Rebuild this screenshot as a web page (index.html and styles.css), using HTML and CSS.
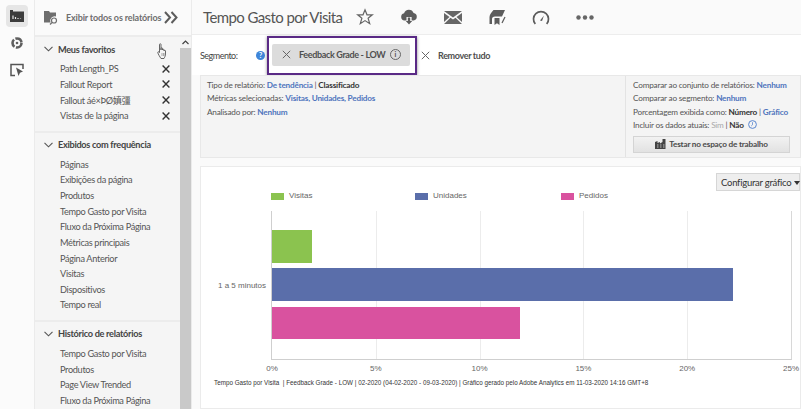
FILE: index.html
```html
<!DOCTYPE html>
<html lang="pt">
  <head>
    <meta charset="utf-8">
    <title>Tempo Gasto por Visita</title>
    <link rel="stylesheet" href="styles.css">
  </head>
  <body>
    <div class="page">
      <aside class="rail">
        <div class="rail-btn active">
          <svg width="14" height="12" viewBox="0 0 14 12"><path d="M0 0h3v1.500h11V12H0z" fill="#3c3c3c"/><path d="M3 9V5.500M5.500 9V7M8 9V8M10.500 9V8.500" stroke="#e6e6e6" stroke-width="1.200"/></svg>
        </div>
        <div class="rail-btn">
          <svg width="14" height="14" viewBox="0 0 14 14"><circle cx="7" cy="7" r="4.500" fill="none" stroke="#5f5f5f" stroke-width="2.600" stroke-dasharray="8 1.500"/><circle cx="7" cy="7" r="1.300" fill="#5f5f5f"/></svg>
        </div>
        <div class="rail-btn">
          <svg width="14" height="14" viewBox="0 0 14 14"><path d="M5 12.500H1V1.500h12v4.500" fill="none" stroke="#555" stroke-width="1.500"/><path d="M6 4.500l7 4-3 1.200-1.500 3.300z" fill="#555"/></svg>
        </div>
      </aside>

      <nav class="nav">
        <div class="nav-top">
          <svg class="nav-top-icon" width="14" height="15" viewBox="0 0 14 15"><path d="M0 1h5l1 1.500h6V6.500A4.500 4.500 0 0 0 6.500 12.500H0z" fill="#6e6e6e"/><circle cx="10" cy="10.500" r="2.500" fill="none" stroke="#6e6e6e" stroke-width="1.200"/><path d="M8 12.500l-2 2" stroke="#6e6e6e" stroke-width="1.200"/></svg>
          <span class="nav-top-label">Exibir todos os relatórios</span>
          <svg class="nav-top-more" width="14" height="13" viewBox="0 0 14 13"><path d="M1 1l5 5.500-5 5.500M7.500 1l5 5.500-5 5.500" fill="none" stroke="#5c5c5c" stroke-width="2"/></svg>
        </div>
        <div class="nav-body">
          <div class="nav-list">
            <section class="group">
              <h3 class="group-title"><svg class="chev" width="9" height="6" viewBox="0 0 9 6"><path d="M.5 .8l4 4 4-4" fill="none" stroke="#555" stroke-width="1.100"/></svg>Meus favoritos</h3>
              <ul class="items">
                <li>Path Length_PS<svg class="rm" width="8" height="8" viewBox="0 0 8 8"><path d="M.6 .6l6.800 6.800M7.400 .6L.6 7.400" stroke="#333" stroke-width="1.400"/></svg></li>
                <li>Fallout Report<svg class="rm" width="8" height="8" viewBox="0 0 8 8"><path d="M.6 .6l6.800 6.800M7.400 .6L.6 7.400" stroke="#333" stroke-width="1.400"/></svg></li>
                <li>Fallout áé×ÞØ嫃彊<svg class="rm" width="8" height="8" viewBox="0 0 8 8"><path d="M.6 .6l6.800 6.800M7.400 .6L.6 7.400" stroke="#333" stroke-width="1.400"/></svg></li>
                <li>Vistas de la página<svg class="rm" width="8" height="8" viewBox="0 0 8 8"><path d="M.6 .6l6.800 6.800M7.400 .6L.6 7.400" stroke="#333" stroke-width="1.400"/></svg></li>
              </ul>
            </section>
            <section class="group">
              <h3 class="group-title"><svg class="chev" width="9" height="6" viewBox="0 0 9 6"><path d="M.5 .8l4 4 4-4" fill="none" stroke="#555" stroke-width="1.100"/></svg>Exibidos com frequência</h3>
              <ul class="items">
                <li>Páginas</li>
                <li>Exibições da página</li>
                <li>Produtos</li>
                <li>Tempo Gasto por Visita</li>
                <li>Fluxo da Próxima Página</li>
                <li>Métricas principais</li>
                <li>Página Anterior</li>
                <li>Visitas</li>
                <li>Dispositivos</li>
                <li>Tempo real</li>
              </ul>
            </section>
            <section class="group">
              <h3 class="group-title"><svg class="chev" width="9" height="6" viewBox="0 0 9 6"><path d="M.5 .8l4 4 4-4" fill="none" stroke="#555" stroke-width="1.100"/></svg>Histórico de relatórios</h3>
              <ul class="items">
                <li>Tempo Gasto por Visita</li>
                <li>Produtos</li>
                <li>Page View Trended</li>
                <li>Fluxo da Próxima Página</li>
              </ul>
            </section>
          </div>
          <div class="scrollbar">
            <div class="scroll-up"><svg width="7" height="5" viewBox="0 0 7 5"><path d="M.5 4l3-3 3 3" fill="none" stroke="#444" stroke-width="1.200"/></svg></div>
            <div class="scroll-thumb"></div>
          </div>
        </div>
        <svg class="hand" width="12" height="16" viewBox="0 0 12 16"><path d="M2.500 1.500c0-1 1.500-1 1.500 0V7V5.500c0-1 1.500-1 1.500 0V7c0-1 1.500-1 1.500 0v1c0-1 1.500-1 1.500 0v3c0 2-1 3.500-1.500 4.500H4C3 14 1 11 .8 9.500c0-1 1-1 1.700 0z" fill="#f4f4f4" stroke="#555" stroke-width=".9"/><path d="M5 10v3M6.500 10v3M8 10v3" stroke="#777" stroke-width=".6"/></svg>
      </nav>

      <main class="main">
        <header class="toolbar">
          <h1 class="title">Tempo Gasto por Visita</h1>
          <div class="tools">
            <svg width="18" height="18" viewBox="0 0 18 18"><path d="M9 1.800l2 5h5.300l-4.200 3.400 1.600 5.500L9 12.600l-4.700 3.100 1.600-5.500L1.700 6.800H7z" fill="none" stroke="#666" stroke-width="1.200"/></svg>
            <svg width="18" height="16" viewBox="0 0 18 16"><path d="M4.500 11.500a3.700 3.700 0 0 1-.4-7.300A5 5 0 0 1 13.600 4a3.800 3.800 0 0 1 0 7.500h-2V8H6.500v3.500z" fill="#5c5c5c"/><path d="M7.800 8.500h2.400v3.500h2L9 15.500 5.800 12h2z" fill="#5c5c5c"/></svg>
            <svg width="18" height="13" viewBox="0 0 18 13"><path d="M0 0h18L9 6.500zM0 2v9l5.500-5zM18 2v9l-5.500-5zM0 13l6.500-6.200L9 8.500l2.500-1.700L18 13z" fill="#666"/></svg>
            <svg width="18" height="16" viewBox="0 0 18 16"><path d="M5.500 1H17L14 7.500H7C5 7.500 4 8.500 4 10v5H1.500V8C1.500 6 3.500 3 5.500 1z" fill="#5c5c5c"/><path d="M6.500 9h5v7l-2.500-1.800L6.500 16z" fill="#5c5c5c"/><path d="M17 8l-3 6" stroke="#5c5c5c" stroke-width="1.300"/></svg>
            <svg width="18" height="15" viewBox="0 0 18 15"><path d="M3.300 14A7.500 7.500 0 1 1 14.700 14" fill="none" stroke="#5c5c5c" stroke-width="1.700"/><path d="M8 10.500L12 5.500 10 11z" fill="#5c5c5c"/></svg>
            <svg width="18" height="5" viewBox="0 0 18 5"><circle cx="2.500" cy="2.500" r="2.200" fill="#666"/><circle cx="9" cy="2.500" r="2.200" fill="#666"/><circle cx="15.500" cy="2.500" r="2.200" fill="#666"/></svg>
          </div>
        </header>

        <div class="segment-bar">
          <span class="segment-label">Segmento:</span>
          <span class="help">?</span>
          <div class="chip-frame">
            <div class="chip">
              <svg width="9" height="9" viewBox="0 0 9 9"><path d="M.8 .8l7.400 7.400M8.200 .8L.8 8.200" stroke="#666" stroke-width="1"/></svg>
              <span class="chip-text">Feedback Grade - LOW</span>
              <span class="chip-info">i</span>
            </div>
          </div>
          <svg class="clear-x" width="9" height="9" viewBox="0 0 9 9"><path d="M.8 .8l7.400 7.400M8.200 .8L.8 8.200" stroke="#666" stroke-width="1"/></svg>
          <span class="clear-text">Remover tudo</span>
        </div>

        <div class="info">
          <div class="info-left">
            <p>Tipo de relatório: <a>De tendência</a> | <b>Classificado</b></p>
            <p>Métricas selecionadas: <a>Visitas, Unidades, Pedidos</a></p>
            <p>Analisado por: <a>Nenhum</a></p>
          </div>
          <div class="info-right">
            <p>Comparar ao conjunto de relatórios: <a>Nenhum</a></p>
            <p>Comparar ao segmento: <a>Nenhum</a></p>
            <p>Porcentagem exibida como: <b>Número</b> | <a>Gráfico</a></p>
            <p>Incluir os dados atuais: <span class="off">Sim</span> | <b>Não</b> <svg class="clock" width="9" height="9" viewBox="0 0 9 9"><circle cx="4.500" cy="4.500" r="3.900" fill="none" stroke="#5b87d0"/><path d="M4.500 2.200v2.600L3.200 6" fill="none" stroke="#5b87d0" stroke-width=".8"/></svg></p>
            <button class="try">
              <svg width="11" height="10" viewBox="0 0 11 10"><path d="M0 10V3l2.500-1v2L5 3v1.500L7.500 3V0h3v10z" fill="#444"/><path d="M2 6h1.500M5 6h1.500M8 6h1.500M2 8h1.500M5 8h1.500M8 8h1.500" stroke="#ddd" stroke-width=".8"/></svg>
              Testar no espaço de trabalho
            </button>
          </div>
        </div>

        <section class="card">
          <button class="config">Configurar gráfico<span class="caret"></span></button>
          <div class="legend">
            <span class="key k-green"></span><span class="key-label l-green">Visitas</span>
            <span class="key k-blue"></span><span class="key-label l-blue">Unidades</span>
            <span class="key k-pink"></span><span class="key-label l-pink">Pedidos</span>
          </div>
          <div class="plot">
            <i class="grid" style="left:20%"></i>
            <i class="grid" style="left:40%"></i>
            <i class="grid" style="left:60%"></i>
            <i class="grid" style="left:80%"></i>
            <div class="bar bar-green" style="width:7.700%"></div>
            <div class="bar bar-blue" style="width:88.900%"></div>
            <div class="bar bar-pink" style="width:47.700%"></div>
            <span class="cat">1 a 5 minutos</span>
            <span class="tick" style="left:0">0%</span>
            <span class="tick" style="left:20%">5%</span>
            <span class="tick" style="left:40%">10%</span>
            <span class="tick" style="left:60%">15%</span>
            <span class="tick" style="left:80%">20%</span>
            <span class="tick" style="left:100%">25%</span>
          </div>
          <p class="foot">Tempo Gasto por Visita &nbsp;| Feedback Grade - LOW | 02-2020 (04-02-2020 - 09-03-2020) | Gráfico gerado pelo Adobe Analytics em 11-03-2020 14:16 GMT+8</p>
        </section>
      </main>
    </div>
  </body>
</html>
```

FILE: styles.css
```css
* { box-sizing: border-box; }
html, body { margin: 0; height: 100%; }
body {
  font-family: "Lato", "Noto Sans CJK SC", sans-serif;
  color: #4b4b4b;
  background: #fafafa;
  overflow: hidden;
}
p, h1, h3, ul { margin: 0; padding: 0; }
a { color: #4f74bd; font-weight: 700; }
b { color: #333; }

.page { display: flex; width: 801px; height: 409px; overflow: hidden; }

/* left icon rail */
.rail {
  width: 35px;
  flex: none;
  display: flex;
  flex-direction: column;
  align-items: center;
  padding-top: 5px;
  gap: 1px;
  background: #fbfbfb;
  border-right: 1px solid #ebebeb;
}
.rail-btn {
  width: 22px;
  height: 22px;
  margin-bottom: 4px;
  display: flex;
  align-items: center;
  justify-content: center;
  border-radius: 4px;
}
.rail-btn.active { background: #e6e6e6; }

/* reports nav */
.nav {
  width: 157px;
  flex: none;
  position: relative;
  display: flex;
  flex-direction: column;
  background: #f5f5f5;
  border-right: 1px solid #ebebeb;
}
.nav-top {
  height: 37px;
  flex: none;
  display: flex;
  align-items: center;
  padding: 0 13px 0 9px;
  background: #fafafa;
  border-bottom: 2px solid #ececec;
}
.nav-top-icon, .nav-top-more { flex: none; }
.nav-top-label {
  margin-left: 8px;
  font-size: 9px;
  font-weight: 700;
  letter-spacing: -.15px;
  color: #6e6e6e;
  white-space: nowrap;
}
.nav-top-more { margin-left: auto; }
.nav-body { flex: 1; display: flex; min-height: 0; }
.nav-list { flex: 1; min-width: 0; overflow: hidden; }
.group { padding: 5px 0 7px; border-bottom: 2px solid #ececec; height: auto; }
.group:last-child { border-bottom: 0; }
.group-title {
  display: flex;
  align-items: center;
  height: 14px;
  margin-bottom: 5px;
  padding-left: 9px;
  font-size: 9.200px;
  font-weight: 700;
  letter-spacing: -.3px;
  color: #444;
}
.chev { margin-right: 5px; }
.items { list-style: none; }
.items li {
  display: flex;
  justify-content: space-between;
  align-items: center;
  height: 15.640px;
  padding: 0 10px 0 25px;
  font-size: 9.200px;
  letter-spacing: -.33px;
  color: #555;
  white-space: nowrap;
}
.scrollbar { width: 11px; flex: none; display: flex; flex-direction: column; background: #f5f5f5; }
.scroll-up { height: 11px; display: flex; align-items: center; justify-content: center; }
.scroll-thumb { flex: 1; background: #c9c9c9; }
.hand { position: absolute; left: 122px; top: 43px; }

/* main column */
.main { flex: 1; min-width: 0; display: flex; flex-direction: column; }
.toolbar {
  height: 35px;
  flex: none;
  display: flex;
  align-items: center;
  padding-left: 11px;
  background: #fafafa;
  border-bottom: 1px solid #ededed;
}
.title { font-size: 15px; font-weight: 400; letter-spacing: -.6px; color: #555; white-space: nowrap; }
.tools { display: flex; align-items: center; gap: 26px; margin-left: 14px; }

.segment-bar {
  height: 40px;
  flex: none;
  display: flex;
  align-items: center;
  padding-left: 8px;
  background: #fff;
  font-size: 9px;
}
.segment-label { width: 35px; color: #444; letter-spacing: -.5px; white-space: nowrap; }
.help {
  width: 9px;
  height: 9px;
  flex: none;
  margin-left: 21px;
  border-radius: 50%;
  background: #3f86d9;
  color: #fff;
  font-size: 7px;
  font-weight: 700;
  line-height: 9px;
  text-align: center;
}
.chip-frame {
  margin-left: 2px;
  height: 39px;
  width: 150px;
  flex: none;
  padding: 6px 5px 6px 3px;
  background: #fff;
  border: 2px solid #5a2a86;
  box-shadow: 0 1px 3px rgba(0, 0, 0, .45);
}
.chip {
  height: 22px;
  display: flex;
  align-items: center;
  padding: 0 9px 0 10px;
  border-radius: 2px;
  background: #dcdcdc;
  font-weight: 700;
  letter-spacing: -.35px;
  color: #4f4f4f;
}
.chip-text { margin-left: 8px; white-space: nowrap; }
.chip-info {
  width: 11px;
  height: 11px;
  flex: none;
  margin-left: auto;
  border: 1px solid #666;
  border-radius: 50%;
  font-size: 7px;
  letter-spacing: 0;
  line-height: 9px;
  text-align: center;
}
.clear-x { margin-left: 4px; flex: none; }
.clear-text { margin-left: 8px; font-weight: 700; letter-spacing: -.35px; color: #4f4f4f; }

/* report info panel */
.info {
  height: 83px;
  flex: none;
  margin-left: 8px;
  display: flex;
  background: #f4f4f4;
  border: 1px solid #e8e8e8;
  font-size: 8.200px;
  letter-spacing: -.2px;
  color: #555;
}
.info p { height: 13.400px; line-height: 13.400px; white-space: nowrap; }
.info-left { flex: 1; padding: 3px 6px; }
.info-right { width: 175px; flex: none; padding: 3px 7px; border-left: 1px solid #e3e3e3; }
.off { color: #a9a9a9; }
.clock { vertical-align: -1px; margin-left: 2px; }
.try {
  width: 157px;
  height: 17px;
  margin-top: 3px;
  display: flex;
  align-items: center;
  justify-content: center;
  gap: 3px;
  padding: 0;
  border: 1px solid #d4d4d4;
  background: linear-gradient(#f2f2f2, #e2e2e2);
  font: 700 8.200px "Lato", sans-serif;
  letter-spacing: -.2px;
  color: #4b4b4b;
}

/* chart card, plot is a free canvas */
.card {
  flex: 1;
  margin: 8px 0 0 8px;
  position: relative;
  background: #fff;
  border: 1px solid #ebebeb;
}
.config {
  position: absolute;
  right: 0;
  top: 6px;
  width: 84px;
  height: 18px;
  padding: 0 0 0 4px;
  border: 1px solid #d6d6d6;
  background: #eee;
  font: 400 9.500px "Lato", sans-serif;
  letter-spacing: -.25px;
  color: #333;
  text-align: left;
  white-space: nowrap;
}
.caret {
  display: inline-block;
  margin-left: 3px;
  vertical-align: 1px;
  border: 3px solid transparent;
  border-top: 4px solid #333;
  border-bottom: 0;
}
.legend {
  position: absolute;
  left: 70px;
  top: 26px;
  width: 400px;
  height: 9px;
  font-family: "Liberation Sans", sans-serif;
  font-size: 8px;
  color: #666;
}
.key, .key-label { position: absolute; top: 0; }
.key { width: 13px; height: 7px; }
.key-label { top: -2px; }
.k-green { left: 0; background: #8bc34f; }
.l-green { left: 18px; }
.k-blue { left: 144px; background: #5a6eaa; }
.l-blue { left: 162px; }
.k-pink { left: 290px; background: #d9529f; }
.l-pink { left: 308px; }
.plot {
  position: absolute;
  left: 70px;
  top: 44px;
  width: 521px;
  height: 149px;
  border-left: 1px solid #cfcfcf;
  border-right: 1px solid #d8d8d8;
  border-bottom: 1px solid #cfcfcf;
  font-family: "Liberation Sans", sans-serif;
  font-size: 8px;
  color: #666;
}
.grid { position: absolute; top: 0; bottom: 0; width: 1px; background: #ececec; }
.bar { position: absolute; left: 0; height: 33px; }
.bar-green { top: 19px; background: #8bc34f; }
.bar-blue { top: 57px; background: #5a6eaa; }
.bar-pink { top: 96px; height: 32px; background: #d9529f; }
.cat { position: absolute; right: calc(100% + 6px); top: 70px; white-space: nowrap; }
.tick { position: absolute; top: 153px; transform: translateX(-50%); }
.foot {
  position: absolute;
  left: 13px;
  top: 212px;
  font-family: "Liberation Sans", sans-serif;
  font-size: 6.300px;
  color: #333;
  white-space: nowrap;
}
```
